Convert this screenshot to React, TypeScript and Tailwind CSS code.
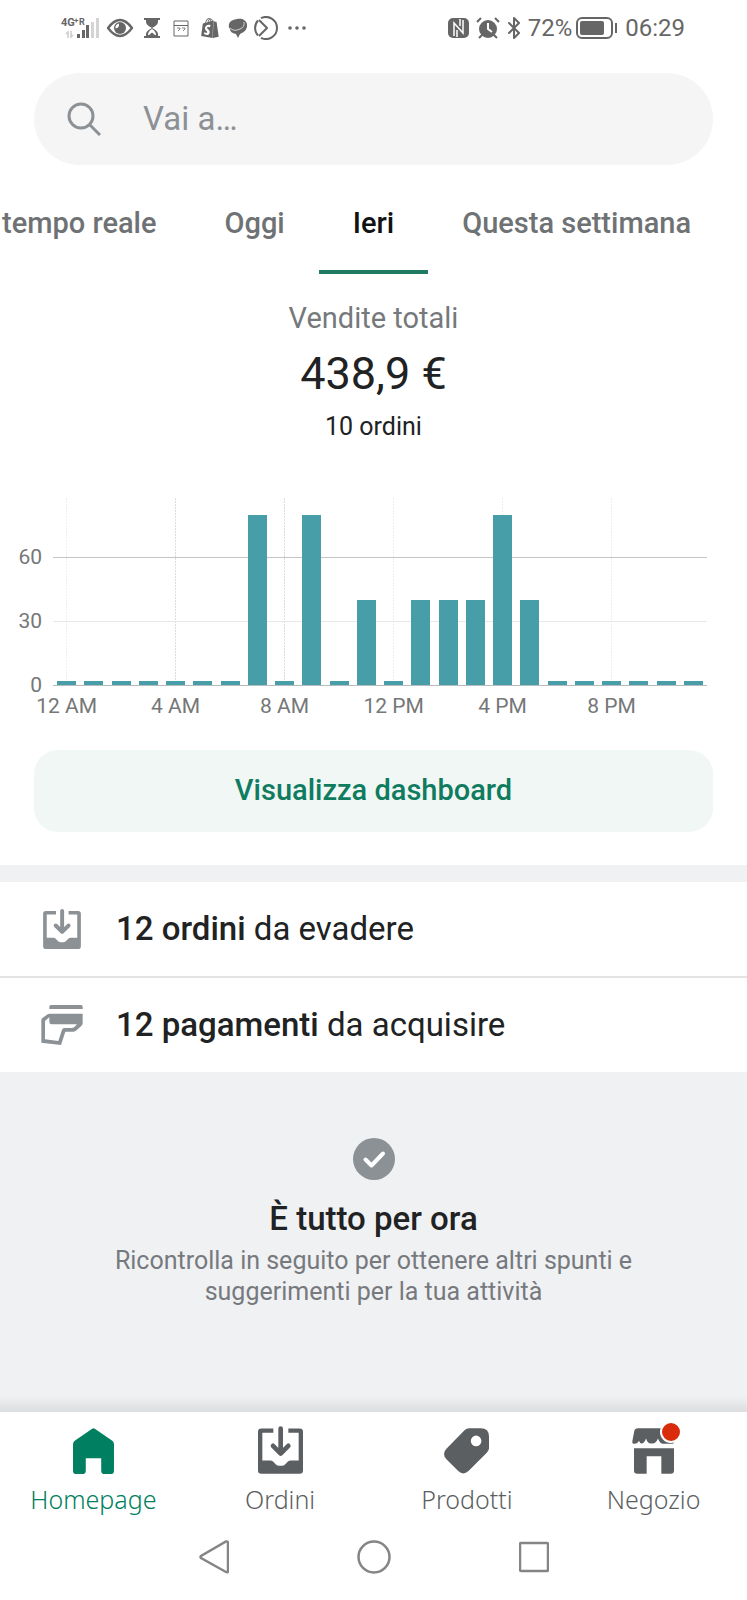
import React from "react";
import { Bluetooth } from "lucide-react";
import { SiShopify } from "react-icons/si";

const tabs = ["tempo reale", "Oggi", "Ieri", "Questa settimana"];

const hourlySales = [
  0, 0, 0, 0, 0, 0, 0, 80, 0, 80, 0, 40, 0, 40, 40, 40, 80, 40, 0, 0, 0, 0, 0, 0,
];

const hourLabels = ["12 AM", "4 AM", "8 AM", "12 PM", "4 PM", "8 PM"];

const OrdersIcon = ({ className }: { className?: string }) => (
  <svg viewBox="0 0 135 143" className={className} fill="currentColor" aria-hidden="true">
    <path d="M10 7H46V20H13V103H36Q42 103 46 107L53 114Q58 119 63 119H72Q77 119 82 114L89 107Q93 103 99 103H122V20H91V7H125Q135 7 135 17V133Q135 143 125 143H10Q0 143 0 133V17Q0 7 10 7Z" />
    <path
      d="M68 7V80M45 59L68 82L91 59"
      fill="none"
      stroke="currentColor"
      strokeWidth="14"
      strokeLinecap="round"
      strokeLinejoin="round"
    />
  </svg>
);

const PaymentsIcon = ({ className }: { className?: string }) => (
  <svg viewBox="0 0 124 120" className={className} fill="currentColor" aria-hidden="true">
    <path d="M29 0H119Q124 0 124 5V12H24V5Q24 0 29 0Z" />
    <path
      fillRule="evenodd"
      d="M24 26H124V54Q124 60 119 64L104 77Q100 80 95 80H72L59 120L0 113V46Q0 42 3 39L20 27ZM11 48V103L51 108L62 74Q64 69 69 69H90Q96 69 100 65L107 58H31Q24 58 24 51V37Z"
    />
  </svg>
);

const HomeIcon = ({ className }: { className?: string }) => (
  <svg viewBox="0 0 122 137" className={className} fill="currentColor" aria-hidden="true">
    <path d="M57 2Q61 -1 65 2L117 38Q122 42 122 48V127Q122 137 112 137H94Q84 137 84 127V90H38V127Q38 137 28 137H10Q0 137 0 127V48Q0 42 5 38Z" />
  </svg>
);

const TagIcon = ({ className }: { className?: string }) => (
  <svg viewBox="0 0 136 137" className={className} fill="currentColor" aria-hidden="true">
    <path
      fillRule="evenodd"
      d="M76 0H111Q136 0 136 25V60Q136 67 130 73L74 129Q58 144 43 129L8 94Q-8 77 8 61L62 6Q68 0 76 0ZM97 22A16 16 0 1 0 97 54A16 16 0 1 0 97 22Z"
    />
  </svg>
);

const StoreIcon = ({ className }: { className?: string }) => (
  <svg viewBox="0 0 132 137" className={className} fill="currentColor" aria-hidden="true">
    <path d="M18 0H112Q118 0 120 6L126 40Q127 47 119 47H93Q84 47 78 31Q72 46 61 46H56Q47 46 42 31Q37 46 28 46Q24 46 21 38Q17 47 7 47Q0 47 1 39L7 8Q9 0 18 0Z" />
    <path d="M6 60H126V127Q126 137 116 137H88V84H44V137H16Q6 137 6 127Z" />
  </svg>
);

const navItems = [
  { label: "Homepage", icon: <HomeIcon className="h-[46px] w-[41px]" />, active: true },
  { label: "Ordini", icon: <OrdersIcon className="h-12 w-[45px]" /> },
  { label: "Prodotti", icon: <TagIcon className="h-[46px] w-[45px]" /> },
  { label: "Negozio", icon: <StoreIcon className="h-[46px] w-[44px]" />, badge: true },
];

const StatusBar = () => (
  <div className="flex h-14 items-center justify-between pr-[62px] pl-[60px] text-[#666]">
    <div className="flex items-center">
      <svg viewBox="0 0 40 24" className="h-6 w-10" fill="currentColor" aria-hidden="true">
        <text x="1" y="10" fontSize="11" fontWeight="700" fontFamily="Roboto, sans-serif">
          4G
        </text>
        <text x="14" y="7" fontSize="8" fontWeight="700" fontFamily="Roboto, sans-serif">
          +
        </text>
        <text x="19" y="9" fontSize="9" fontWeight="700" fontFamily="Roboto, sans-serif">
          R
        </text>
        <path d="M17 18h3v4h-3zM22 14h3v8h-3zM26 9h3v13h-3z" />
        <path d="M31 6h3v16h-3zM36 2h3v20h-3z" fill="#d4d4d4" />
        <path
          d="M8 22v-6l-2 2M11 15v6l2-2"
          fill="none"
          stroke="#ccc"
          strokeWidth="1.5"
        />
      </svg>
      <svg viewBox="0 0 28 20" className="ml-1.5 h-5 w-7" aria-hidden="true">
        <path
          d="M2 10Q8 2 14 2T26 10Q20 18 14 18T2 10Z"
          fill="none"
          stroke="currentColor"
          strokeWidth="2.4"
          strokeLinejoin="round"
        />
        <circle cx="14" cy="10" r="6" fill="currentColor" />
        <path d="M13 5.500A4.500 4.500 0 0 0 9.500 10.500Q13.500 10 13 5.500Z" fill="#fff" />
      </svg>
      <svg viewBox="0 0 16 22" className="ml-2.5 h-[22px] w-4" aria-hidden="true">
        <path d="M0 1H16V3H0ZM0 19H16V21H0Z" fill="currentColor" />
        <path
          d="M2 2V5Q2 8 8 11Q14 8 14 5V2ZM8 11Q2 14 2 17V20H14V17Q14 14 8 11Z"
          fill="currentColor"
        />
        <path d="M8 12Q4 14.500 4 18H5L8 15.500L11 18H12Q12 14.500 8 12Z" fill="#fff" />
      </svg>
      <svg
        viewBox="0 0 16 17"
        className="ml-[13px] h-[17px] w-4"
        fill="none"
        stroke="currentColor"
        aria-hidden="true"
      >
        <path d="M1 1H15V16H1ZM1 5.500H15" />
        <path d="M4 8H7V9L5 11M9 8H12V9L10 11" strokeWidth="0.800" />
      </svg>
      <SiShopify className="ml-[11px] size-5" />
      <svg viewBox="0 0 20 20" className="ml-2 size-5" fill="currentColor" aria-hidden="true">
        <path d="M9 1C14 0 18 2 19 6Q20 13 12 16L10 20L8 16Q2 15 2 11Q0 9 1 6Q2 2 9 1Z" />
        <path d="M2 10Q6 14 12 11Q17 9 16 4" fill="none" stroke="#fff" strokeWidth="0.700" />
      </svg>
      <svg
        viewBox="0 0 24 24"
        className="ml-1.5 size-6"
        fill="none"
        stroke="currentColor"
        strokeWidth="2"
        aria-hidden="true"
      >
        <path d="M7 2.200A11 11 0 1 1 7 21.800M4 19.500A11 11 0 0 1 4 4.500" />
        <path d="M5 4L13 12L5 20" strokeLinejoin="round" />
      </svg>
      <svg viewBox="0 0 18 4" className="ml-2.5 h-1 w-[18px]" fill="currentColor" aria-hidden="true">
        <circle cx="2" cy="2" r="1.800" />
        <circle cx="9" cy="2" r="1.800" />
        <circle cx="16" cy="2" r="1.800" />
      </svg>
    </div>
    <div className="flex items-center">
      <svg viewBox="0 0 21 22" className="h-[22px] w-[21px]" aria-hidden="true">
        <rect x="0" y="1" width="21" height="20" rx="5" fill="currentColor" />
        <path
          d="M6 19V6L15 16V3M9 20V13M12 2V9"
          fill="none"
          stroke="#fff"
          strokeWidth="1.500"
        />
      </svg>
      <svg viewBox="0 0 24 22" className="ml-[7px] h-[22px] w-6" aria-hidden="true">
        <circle cx="12" cy="12" r="9" fill="currentColor" />
        <path
          d="M1 5L5 1M23 5L19 1M6 18L3 21M18 18L21 21"
          stroke="currentColor"
          strokeWidth="2"
        />
        <path d="M12 6V12L16 15" fill="none" stroke="#fff" strokeWidth="2" />
      </svg>
      <Bluetooth className="ml-0.5 size-6" strokeWidth={2} />
      <span className="ml-0.5 text-2xl">72%</span>
      <svg viewBox="0 0 42 22" className="ml-1 h-[22px] w-[42px]" aria-hidden="true">
        <rect
          x="1"
          y="1"
          width="35"
          height="20"
          rx="5"
          fill="none"
          stroke="currentColor"
          strokeWidth="2"
        />
        <rect x="4" y="4" width="24" height="14" rx="2" fill="currentColor" />
        <path d="M39 6h2v10h-2z" fill="currentColor" />
      </svg>
      <span className="ml-[7px] text-2xl">06:29</span>
    </div>
  </div>
);

const SalesChart = () => {
  const left = 53;
  const step = 27.25;
  const base = 195;
  return (
    <svg
      viewBox="0 0 747 230"
      className="mt-[47px] block h-auto w-full"
      role="img"
      aria-label="Vendite totali per ora"
    >
      <g strokeDasharray="2 1">
        {hourLabels.map((label, i) => {
          const x = Math.round(left + (i * 4 + 0.5) * step) - 0.5;
          return (
            <path
              key={label}
              d={`M${x} 8V${base}`}
              stroke={i === 1 || i === 2 ? "#dcdcdc" : "#efefef"}
            />
          );
        })}
      </g>
      <path d="M53 67.500H707" stroke="#c4c4c4" />
      <path d="M53 131.500H707" stroke="#e8e8e8" />
      {hourlySales.map((value, i) => {
        const height = value ? Math.round(value * 2.125) : 4;
        return (
          <rect
            key={i}
            x={Math.round(left + i * step + 4)}
            y={base - height}
            width="19"
            height={height}
            fill="#479da8"
          />
        );
      })}
      <path d="M53 195.500H707" stroke="#b4bcbd" />
      <g fill="#757778" fontSize="21" fontFamily="Roboto, sans-serif">
        <text x="42" y="74" textAnchor="end">60</text>
        <text x="42" y="138" textAnchor="end">30</text>
        <text x="42" y="202" textAnchor="end">0</text>
        {hourLabels.map((label, i) => (
          <text key={label} x={left + (i * 4 + 0.5) * step} y="223" textAnchor="middle">
            {label}
          </text>
        ))}
      </g>
    </svg>
  );
};

const App = () => {
  return (
    <div className="flex min-h-screen flex-col overflow-x-hidden bg-white font-['Roboto',sans-serif] text-[#202223]">
      <StatusBar />

      <label className="mx-[34px] mt-[17px] flex h-[92px] items-center rounded-full bg-[#f5f5f5] pr-8 pl-[33px] text-[#8c9196]">
        <svg
          viewBox="0 0 34 34"
          className="size-[34px] shrink-0"
          fill="none"
          stroke="currentColor"
          strokeWidth="3"
          aria-hidden="true"
        >
          <circle cx="14" cy="14" r="12" />
          <path d="M22.500 22.500L33 33" />
        </svg>
        <input
          type="text"
          aria-label="Cerca"
          placeholder="Vai a…"
          className="ml-[42px] min-w-0 flex-1 bg-transparent text-[33px] leading-10 text-[#202223] outline-none placeholder:text-[#8c9196]"
        />
      </label>

      <div role="tablist" className="mt-[13px] flex h-24 overflow-hidden pl-0.5">
        {tabs.map((tab, i) => (
          <button
            key={tab}
            role="tab"
            aria-selected={tab === "Ieri"}
            className={`shrink-0 border-b-4 pr-[34px] text-[29px] font-medium whitespace-nowrap ${
              i === 0 ? "" : "pl-[34px]"
            } ${
              tab === "Ieri"
                ? "border-[#1f7a63] text-[#111213]"
                : "border-transparent text-[#6f7274]"
            }`}
          >
            {tab}
          </button>
        ))}
      </div>

      <section className="text-center">
        <h2 className="mt-[26px] text-[29px] leading-9 text-[#76797b]">Vendite totali</h2>
        <p className="mt-2.5 text-[45px] leading-[56px]">438,9 €</p>
        <p className="mt-[9px] text-[25px] leading-8">10 ordini</p>
        <SalesChart />
        <div className="mt-[30px] mb-[33px] px-[34px]">
          <button className="h-[82px] w-full rounded-3xl bg-[#f0f7f5] text-[29px] font-medium text-[#0f7b5f]">
            Visualizza dashboard
          </button>
        </div>
      </section>

      <div className="h-[17px] bg-[#f0f1f3]" />

      <a href="#ordini" className="flex h-24 items-center border-b-2 border-[#e1e3e5] pl-[43px]">
        <OrdersIcon className="h-10 w-[38px] text-[#8c9196]" />
        <span className="ml-[35px] text-[33px] leading-10">
          <span className="font-medium">12 ordini</span> da evadere
        </span>
      </a>
      <a href="#pagamenti" className="flex h-[94px] items-center pl-[41px]">
        <PaymentsIcon className="h-10 w-[42px] text-[#8c9196]" />
        <span className="ml-[33px] text-[33px] leading-10">
          <span className="font-medium">12 pagamenti</span> da acquisire
        </span>
      </a>

      <section className="flex flex-1 flex-col items-center bg-[#f0f1f3] px-24 pt-[66px] text-center">
        <svg viewBox="0 0 42 42" className="size-[42px]" aria-hidden="true">
          <circle cx="21" cy="21" r="21" fill="#8c9196" />
          <path
            d="M12.500 21.500L18.500 27.500L30 15.500"
            fill="none"
            stroke="#fff"
            strokeWidth="4"
            strokeLinecap="round"
            strokeLinejoin="round"
          />
        </svg>
        <h3 className="mt-[19px] text-[33px] leading-10 font-medium">È tutto per ora</h3>
        <p className="mt-1.5 text-[25px] leading-[31px] text-[#76797e]">
          Ricontrolla in seguito per ottenere altri spunti e suggerimenti per la tua attività
        </p>
        <div className="mt-auto h-4" />
      </section>

      <div className="-mt-4 h-4 bg-linear-to-b from-[#f0f1f3] to-[#dcddde]" />

      <nav className="grid h-[108px] grid-cols-4 pt-4 font-['Noto_Sans',sans-serif] font-light">
        {navItems.map((item) => (
          <a
            key={item.label}
            href={`#${item.label.toLowerCase()}`}
            className={`flex flex-col items-center ${item.active ? "text-[#008060]" : "text-[#5c5f62]"}`}
          >
            <span className="relative flex h-[46px] items-end">
              {item.icon}
              {item.badge && (
                <span className="absolute -top-[7px] -right-1.5 size-[22px] rounded-full border-2 border-white bg-[#d82c0d]" />
              )}
            </span>
            <span className="mt-[7px] text-[25px] leading-9">{item.label}</span>
          </a>
        ))}
      </nav>

      <div className="flex h-20 items-start justify-center gap-32 pt-5 text-[#858585]">
        <button aria-label="Indietro">
          <svg viewBox="0 0 30 34" className="h-[34px] w-[30px]" aria-hidden="true">
            <path
              d="M27 1.500Q29 1 29 3V31Q29 33 27 32L2 18Q1 17 2 16Z"
              fill="none"
              stroke="currentColor"
              strokeWidth="2.500"
            />
          </svg>
        </button>
        <button aria-label="Home">
          <svg viewBox="0 0 34 34" className="size-[34px]" aria-hidden="true">
            <circle cx="17" cy="17" r="15.500" fill="none" stroke="currentColor" strokeWidth="2.500" />
          </svg>
        </button>
        <button aria-label="App recenti">
          <svg viewBox="0 0 30 34" className="h-[34px] w-[30px]" aria-hidden="true">
            <rect
              x="1"
              y="3"
              width="28"
              height="28"
              rx="1"
              fill="none"
              stroke="currentColor"
              strokeWidth="2.500"
            />
          </svg>
        </button>
      </div>
    </div>
  );
};

export default App;
